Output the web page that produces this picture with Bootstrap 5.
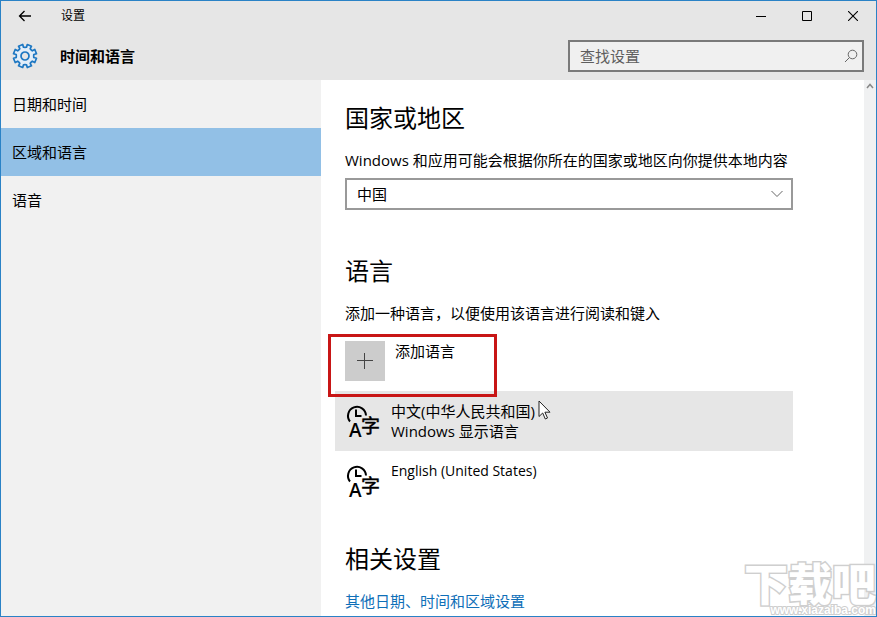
<!DOCTYPE html>
<html lang="zh-CN">
<head>
<meta charset="utf-8">
<meta name="viewport" content="width=device-width, initial-scale=1">
<title>设置</title>
<link href="https://cdn.jsdelivr.net/npm/bootstrap@5.3.0/dist/css/bootstrap.min.css" rel="stylesheet">
<style>
  body { font-family: "Open Sans", "Noto Sans CJK SC", sans-serif; font-size: 15px; line-height: 20px; color: #000; background: #fff; }
  .app-window { border: 1px solid #2a82c6; overflow: hidden; }
  .app-head { background: #e6e6e6; }
  .title-bar { height: 30px; font-size: 12px; }
  .title-bar button { width: 46px; height: 30px; color: #000; }
  .title-bar .back-btn { width: 48px; }
  .head-row { height: 49px; padding-right: 12px; }
  .gear-cell { width: 48px; }
  .page-name { font-size: 15px; line-height: 20px; font-weight: 700; padding-left: 11px; }
  .search-wrap { width: 296px; height: 32px; border: 2px solid #7a7a7a; background: #f0f0f0; }
  .search-wrap input { font-size: 15px; line-height: 20px; padding: 0 10px; color: #333; }
  .search-wrap input::placeholder { color: #5e5e5e; opacity: 1; }
  .side-nav { width: 320px; background: #f1f1f1; }
  .side-nav a { height: 48px; padding: 0 11px; color: #000; }
  .side-nav a.active { background: #92c0e6; }
  .settings-main { padding: 22px 24px 5px; }
  .settings-body { max-width: 448px; }
  .settings-body h2 { font-size: 24px; line-height: 32px; font-weight: 400; margin: 0 0 16px; }
  .region-select { height: 32px; border: 2px solid #999; font-size: 15px; line-height: 20px; padding: 0 32px 0 10px; color: #000;
    background-image: url("data:image/svg+xml,%3Csvg xmlns='http://www.w3.org/2000/svg' viewBox='0 0 12 12' fill='none' stroke='%23666'%3E%3Cpath d='M0.5 3l5.500 5.500L11.500 3'/%3E%3C/svg%3E");
    background-size: 12px 12px; background-position: right 8px center; }
  .lang-section { padding-top: 45px; }
  .related-section { padding-top: 32px; }
  .add-row { margin-top: 18px; margin-bottom: 10px; }
  .add-btn { gap: 10px; color: #000; font-size: 15px; line-height: 20px; }
  .plus-tile { width: 40px; height: 40px; background: #ccc; }
  .callout-frame { left: -17px; top: -7px; width: 169px; height: 63px; border: 3px solid #c81616; z-index: 2; pointer-events: none; }
  .lang-list { margin-left: -10px; }
  .lang-item { min-height: 60px; padding: 10px; gap: 6px; color: #000; background: #fff; font-size: 15px; line-height: 20px; }
  .lang-item.current { background: #e6e6e6; }
  .latin-name { font-size: 14px; }
  .pointer-mark { left: 203px; top: 9px; }
  .related-link { color: #0f6fb8; }
  .scroll-rail { width: 12px; background: #f0f1f2; padding: 3px 0; }
  .site-stamp { right: 0; bottom: 0; z-index: 3; pointer-events: none; text-align: right; color: #fff; paint-order: stroke fill; }
  .stamp-name { font-family: "Noto Sans CJK SC", sans-serif; font-weight: 900; font-size: 44px; line-height: 44px; -webkit-text-stroke: 3px #cfcfcf; }
  .stamp-url { font-family: "Liberation Sans", sans-serif; font-weight: 700; font-size: 12px; line-height: 12px; -webkit-text-stroke: 2px #cfcfcf; }
</style>
<script src="https://cdn.jsdelivr.net/npm/bootstrap@5.3.0/dist/js/bootstrap.bundle.min.js"></script>
</head>
<body>
<svg class="d-none" aria-hidden="true">
  <symbol id="lang-icon" viewBox="0 0 40 40">
    <path d="M5 20.500A9 9 0 1 1 21 14.500" fill="none" stroke="#000" stroke-width="2"/>
    <path d="M11 8.500v6.500h5.500" fill="none" stroke="#000" stroke-width="2"/>
    <text x="4" y="36" font-family="Open Sans, sans-serif" font-size="19" font-weight="600">A</text>
    <text x="16" y="32" font-family="Noto Sans CJK SC, sans-serif" font-size="19" stroke="#000" stroke-width=".5">字</text>
  </symbol>
</svg>
<div class="app-window position-relative d-flex flex-column min-vh-100">
  <header class="app-head">
    <div class="title-bar d-flex align-items-center">
      <button type="button" class="back-btn btn p-0 border-0 rounded-0 d-flex align-items-center justify-content-center" aria-label="返回">
        <svg width="14" height="12" viewBox="0 0 14 12" fill="none" stroke="#000" stroke-width="1.300"><path d="M13 6H1.500M6.500 1l-5 5 5 5"/></svg>
      </button>
      <span class="ms-2 ps-1 me-auto">设置</span>
      <button type="button" class="btn p-0 border-0 rounded-0 d-flex align-items-center justify-content-center" aria-label="最小化">
        <svg width="10" height="10" viewBox="0 0 10 10" stroke="#000"><path d="M0 5.500h10"/></svg>
      </button>
      <button type="button" class="btn p-0 border-0 rounded-0 d-flex align-items-center justify-content-center" aria-label="最大化">
        <svg width="10" height="10" viewBox="0 0 10 10" stroke="#000" fill="none"><path d="M.5.5h9v9h-9z"/></svg>
      </button>
      <button type="button" class="btn p-0 border-0 rounded-0 d-flex align-items-center justify-content-center" aria-label="关闭">
        <svg width="10" height="10" viewBox="0 0 10 10" stroke="#000" stroke-width="1.100"><path d="M0 0l10 10M10 0L0 10"/></svg>
      </button>
    </div>
    <div class="head-row d-flex align-items-center">
      <div class="gear-cell d-flex justify-content-center">
        <svg width="26" height="26" viewBox="-13 -13 26 26" fill="none" stroke="#1d77c2" stroke-width="1.700" stroke-linejoin="round">
          <path fill="#e3eef9" d="M-2.300 -11.500L-1.500 -8.800A9 9 0 0 0 1.500 -8.800L2.300 -11.500L6.500 -9.800L5.200 -7.300A9 9 0 0 0 7.300 -5.200L9.800 -6.500L11.500 -2.300L8.800 -1.500A9 9 0 0 0 8.800 1.500L11.500 2.300L9.800 6.500L7.300 5.200A9 9 0 0 0 5.200 7.300L6.500 9.800L2.300 11.500L1.500 8.800A9 9 0 0 0 -1.500 8.800L-2.300 11.500L-6.500 9.800L-5.200 7.300A9 9 0 0 0 -7.300 5.200L-9.800 6.500L-11.500 2.300L-8.800 1.500A9 9 0 0 0 -8.800 -1.500L-11.500 -2.300L-9.800 -6.500L-7.300 -5.200A9 9 0 0 0 -5.200 -7.300L-6.500 -9.800Z"/>
          <circle r="4" fill="#e6e6e6"/>
        </svg>
      </div>
      <h1 class="page-name mb-0 me-auto">时间和语言</h1>
      <div class="search-wrap d-flex align-items-center pe-1">
        <input type="search" class="form-control border-0 rounded-0 bg-transparent shadow-none" placeholder="查找设置" aria-label="查找设置">
        <svg class="flex-shrink-0" width="14" height="14" viewBox="0 0 14 14" fill="none" stroke="#666"><circle cx="8.500" cy="5.500" r="4.300"/><path d="M5.500 8.500L1 13"/></svg>
      </div>
    </div>
  </header>
  <div class="d-flex flex-grow-1">
    <nav class="side-nav nav flex-column flex-nowrap flex-shrink-0">
      <a class="nav-link d-flex align-items-center" href="#date">日期和时间</a>
      <a class="nav-link d-flex align-items-center active" href="#region" aria-current="page">区域和语言</a>
      <a class="nav-link d-flex align-items-center" href="#speech">语音</a>
    </nav>
    <main class="settings-main flex-grow-1">
      <div class="settings-body">
        <section>
          <h2>国家或地区</h2>
          <label for="region" class="d-block mb-2 text-nowrap">Windows 和应用可能会根据你所在的国家或地区向你提供本地内容</label>
          <select id="region" class="region-select form-select rounded-0 shadow-none"><option>中国</option></select>
        </section>
        <section class="lang-section">
          <h2>语言</h2>
          <p class="mb-0">添加一种语言，以便使用该语言进行阅读和键入</p>
          <div class="add-row position-relative">
            <button type="button" class="add-btn btn p-0 border-0 rounded-0 d-flex align-items-start">
              <span class="plus-tile d-flex align-items-center justify-content-center">
                <svg width="16" height="16" viewBox="0 0 16 16" stroke="#444"><path d="M7.500 0v16M0 7.500h16"/></svg>
              </span>
              <span>添加语言</span>
            </button>
            <div class="callout-frame position-absolute"></div>
          </div>
          <div class="lang-list">
            <button type="button" class="lang-item current btn border-0 rounded-0 w-100 d-flex align-items-start text-start position-relative">
              <svg class="flex-shrink-0" width="40" height="40"><use href="#lang-icon"/></svg>
              <span>中文(中华人民共和国)<br>Windows 显示语言</span>
              <svg class="pointer-mark position-absolute" width="13" height="20" viewBox="0 0 13 20" fill="#fff" stroke="#222"><path d="M1 1v15.500l3.700-3.500 2.600 6 2.200-1-2.600-5.800h5.100z"/></svg>
            </button>
            <button type="button" class="lang-item btn border-0 rounded-0 w-100 d-flex align-items-start text-start">
              <svg class="flex-shrink-0" width="40" height="40"><use href="#lang-icon"/></svg>
              <span class="latin-name">English (United States)</span>
            </button>
          </div>
        </section>
        <section class="related-section">
          <h2>相关设置</h2>
          <a class="related-link d-block text-decoration-none" href="#more">其他日期、时间和区域设置</a>
        </section>
      </div>
    </main>
    <div class="scroll-rail d-flex flex-column align-items-center justify-content-between flex-shrink-0">
      <svg width="8" height="6" viewBox="0 0 8 6" fill="none" stroke="#888" stroke-width="1.500"><path d="M1 5l3-3.500L7 5"/></svg>
      <svg width="8" height="6" viewBox="0 0 8 6" fill="none" stroke="#888" stroke-width="1.500"><path d="M1 1l3 3.500L7 1"/></svg>
    </div>
  </div>
  <div class="site-stamp position-absolute">
    <div class="stamp-name">下载吧</div>
    <div class="stamp-url">www.xiazaiba.com</div>
  </div>
</div>
</body>
</html>
